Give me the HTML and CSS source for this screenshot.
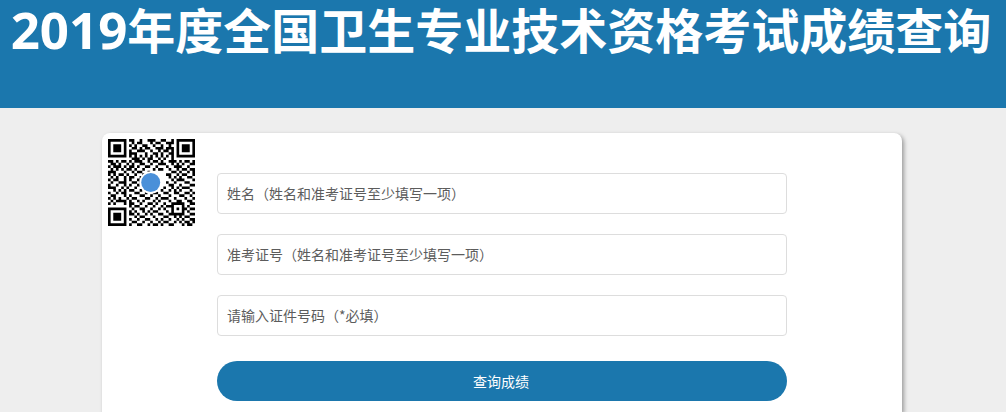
FILE: index.html
```html
<!DOCTYPE html>
<html lang="zh-CN">
<head>
<meta charset="utf-8">
<title>2019年度全国卫生专业技术资格考试成绩查询</title>
<link rel="stylesheet" href="styles.css">
</head>
<body>
<header class="banner"><h1 class="banner-title"><span class="banner-year">2019</span>年度全国卫生专业技术资格考试成绩查询</h1></header>
<main class="page">
  <section class="card">
    <div class="qr-col">
      <svg class="qr" viewBox="0 0 33 33">
        <path fill="#000" d="M0 0h7v7H0zM26 0h7v7h-7zM0 26h7v7H0z"/>
        <path fill="#fff" d="M1 1h5v5H1zM27 1h5v5h-5zM1 27h5v5H1z"/>
        <path fill="#000" d="M2 2h3v3H2zM28 2h3v3h-3zM2 28h3v3H2z"/>
        <path class="qr-modules" transform="translate(0 .5)" d="M8 0h2M12 0h1M15 0h3M20 0h2M24 0h1
M9 1h1M11 1h2M16 1h1M18 1h2M22 1h3
M8 2h1M10 2h1M13 2h2M17 2h1M20 2h1M23 2h1
M9 3h2M12 3h1M14 3h2M18 3h3M22 3h3
M8 4h1M11 4h3M16 4h1M19 4h1M21 4h2M24 4h1
M8 5h3M14 5h1M17 5h2M20 5h1M23 5h2
M8 6h1M10 6h1M12 6h1M14 6h1M16 6h1M18 6h1M20 6h1M22 6h1M24 6h1
M9 7h3M13 7h1M15 7h2M19 7h1M21 7h1M24 7h1
M0 8h2M3 8h1M5 8h2M8 8h1M10 8h3M15 8h1M17 8h2M20 8h1M23 8h3M27 8h1M29 8h2M32 8h1
M1 9h2M4 9h1M7 9h1M9 9h1M12 9h2M16 9h1M19 9h3M24 9h1M26 9h1M28 9h1M31 9h2
M0 10h1M2 10h3M6 10h1M8 10h2M11 10h1M14 10h2M18 10h1M22 10h1M25 10h3M30 10h1
M1 11h1M3 11h1M5 11h1M7 11h2M10 11h1M13 11h1M17 11h1M19 11h2M23 11h1M26 11h1M28 11h2M31 11h2
M0 12h3M6 12h1M9 12h1M11 12h2M15 12h1M24 12h2M27 12h1M30 12h1M32 12h1
M0 13h1M2 13h1M4 13h2M7 13h1M10 13h1M13 13h2M22 13h2M26 13h1M28 13h2M32 13h1
M1 14h1M3 14h1M6 14h1M8 14h2M12 14h1M23 14h1M25 14h1M27 14h1M30 14h2
M0 15h1M2 15h2M6 15h1M8 15h1M11 15h1M24 15h1M26 15h3M32 15h1
M1 16h1M4 16h3M9 16h2M12 16h1M22 16h1M25 16h1M29 16h2
M0 17h1M3 17h1M6 17h1M8 17h1M11 17h1M23 17h2M27 17h1M31 17h2
M0 18h3M5 18h1M7 18h1M10 18h1M13 18h1M21 18h1M24 18h1M26 18h1M28 18h3
M2 19h1M4 19h1M6 19h1M8 19h2M12 19h1M14 19h2M20 19h1M23 19h1M25 19h1M27 19h1M31 19h1
M0 20h1M3 20h1M5 20h2M10 20h2M14 20h1M17 20h2M21 20h2M25 20h2M29 20h2M32 20h1
M1 21h2M6 21h1M8 21h1M12 21h2M16 21h1M19 21h1M23 21h1M27 21h2M31 21h1
M0 22h1M2 22h1M4 22h1M7 22h1M9 22h2M14 22h2M18 22h1M20 22h3M25 22h1M29 22h1M32 22h1
M1 23h1M3 23h4M8 23h1M11 23h1M13 23h1M17 23h1M19 23h1M23 23h1M26 23h2M30 23h2
M0 24h1M2 24h1M6 24h1M8 24h2M12 24h1M15 24h2M18 24h1M21 24h1M24 24h5M31 24h2
M8 25h1M10 25h2M14 25h1M17 25h1M20 25h1M22 25h3M28 25h1M30 25h1
M9 26h1M12 26h2M16 26h1M19 26h1M21 26h1M24 26h1M26 26h1M28 26h2M31 26h2
M8 27h1M10 27h1M13 27h1M15 27h1M17 27h2M22 27h1M24 27h1M28 27h1M30 27h1
M8 28h2M11 28h1M14 28h1M16 28h1M19 28h2M23 28h6M31 28h2
M10 29h1M12 29h2M17 29h1M21 29h2M25 29h1M27 29h1M29 29h2
M8 30h1M11 30h1M14 30h2M18 30h1M20 30h1M23 30h1M26 30h1M28 30h1M31 30h2
M9 31h2M13 31h1M16 31h1M19 31h1M21 31h2M25 31h1M27 31h1M29 31h2M32 31h1
M8 32h1M11 32h2M15 32h1M17 32h2M20 32h1M23 32h2M28 32h1M30 32h2"/>
        <circle cx="16.2" cy="16.5" r="4.3" fill="#fff"/>
        <circle cx="16.2" cy="16.5" r="3.6" fill="#4a90d9"/>
      </svg>
    </div>
    <form class="form">
      <input class="field" placeholder="姓名（姓名和准考证号至少填写一项）">
      <input class="field" placeholder="准考证号（姓名和准考证号至少填写一项）">
      <input class="field" placeholder="请输入证件号码（*必填）">
      <button class="submit" type="button">查询成绩</button>
    </form>
  </section>
</main>
</body>
</html>
```
FILE: styles.css
```css
* { box-sizing: border-box; }
html, body { margin: 0; height: 100%; overflow: hidden; }
body { display: flex; flex-direction: column; background: #eeeeee; font-family: "Noto Sans CJK SC", sans-serif; }
.banner { height: 108px; flex: none; background: #1b77ad; padding-right: 4px; }
.banner-title { margin: 0; font-size: 48px; line-height: 56px; font-weight: 700; color: #fff; text-align: center; white-space: nowrap; font-family: "Noto Sans CJK SC", sans-serif; }
.banner-year { font-family: "Noto Sans", sans-serif; font-size: 51px; }
.page { flex: 1; min-height: 0; display: flex; justify-content: center; padding: 25px 2px 0 0; }
.card { width: 800px; background: #fff; border-radius: 8px 8px 0 0; box-shadow: 2px 2px 4px rgba(0,0,0,.35); display: flex; }
.qr-col { width: 115px; padding: 6px 0 0 6px; flex: none; }
.qr { display: block; width: 87px; height: 87px; filter: blur(.3px); }
.qr-modules { fill: none; stroke: #000; stroke-width: 1; }
.form { width: 570px; padding-top: 40px; display: flex; flex-direction: column; }
.field { width: 100%; height: 41px; flex: none; margin-bottom: 20px; padding: 0 9px 2px; border: 1px solid #ddd; border-radius: 4px; background: #fff; font: 14px "Noto Sans CJK SC", sans-serif; color: #555; outline: 0; }
.field::placeholder { color: #5c5c5c; opacity: 1; }
.submit { height: 40px; flex: none; margin-top: 5px; padding: 0 8px 0 6px; border: 0; border-radius: 20px; background: #1b77ad; color: #fff; font: 14px "Noto Sans CJK SC", sans-serif; }
```
